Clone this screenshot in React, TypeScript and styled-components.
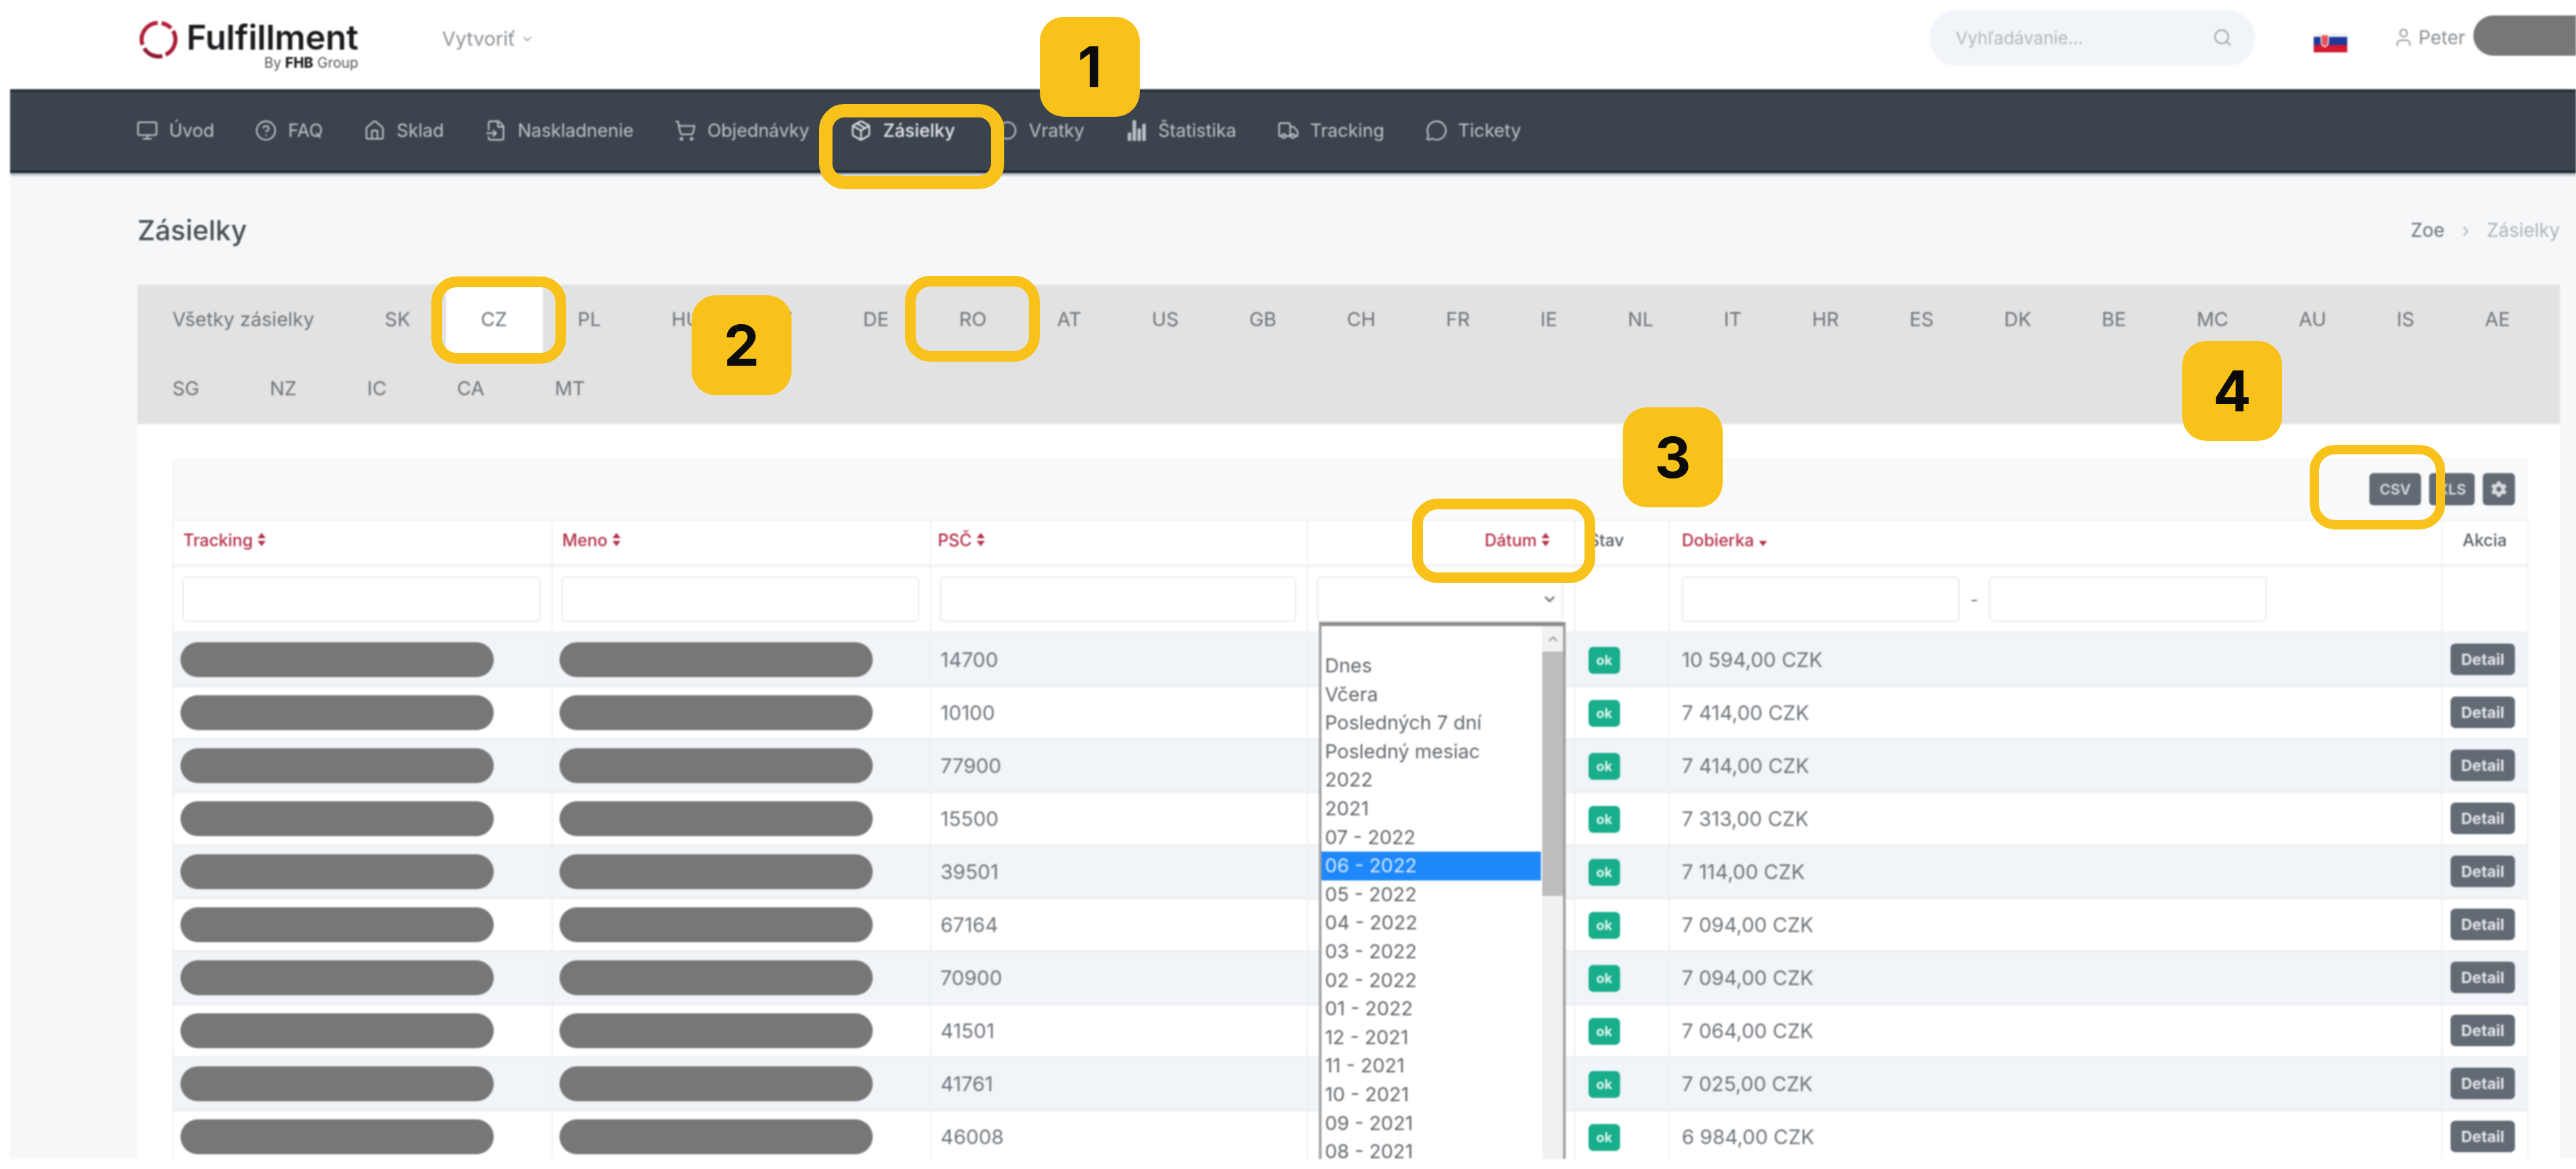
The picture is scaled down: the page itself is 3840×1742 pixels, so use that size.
import React from "react";
import styled, { createGlobalStyle } from "styled-components";
import {
  Monitor, CircleHelp, Home, FileInput, ShoppingCart, Package, RotateCcw,
  Truck, MessageCircle, Search, User, ChevronDown, ChevronUp,
} from "lucide-react";
import { FaCog } from "react-icons/fa";
import { IoStatsChart } from "react-icons/io5";

const Global = createGlobalStyle`
  html, body { margin: 0; padding: 0; background: #fff; }
  * { box-sizing: border-box; }
  body { font-family: Inter, "Open Sans", "Liberation Sans", sans-serif; }
`;

const Root = styled.div`
  position: relative;
  width: 3840px;
  height: 1742px;
  background: #fff;
  overflow: hidden;
`;
const Frame = styled.div`
  margin-left: 15px;
  height: 1727px;
  background: #f6f7f9;
  overflow: hidden;
  filter: blur(1.3px);
`;

/* top header */
const TopBar = styled.header`
  height: 133px;
  background: #fff;
  display: flex;
  align-items: center;
  padding-left: 192px;
`;
const Logo = styled.div`
  display: flex;
  align-items: flex-start;
  gap: 13px;
  width: 452px;
  padding-top: 2px;
`;
const LogoWords = styled.div`
  display: flex;
  flex-direction: column;
  align-items: flex-end;
`;
const LogoName = styled.div`
  font-size: 51px;
  font-weight: 600;
  line-height: 52px;
  letter-spacing: -0.2px;
  color: #1b1b1f;
`;
const LogoSub = styled.div`
  font-size: 21px;
  line-height: 24px;
  color: #55555c;
  b { color: #222; font-weight: 800; }
`;
const CreateMenu = styled.div`
  display: flex;
  align-items: center;
  gap: 8px;
  font-size: 29px;
  color: #8b9095;
  margin-top: -18px;
`;
const TopRight = styled.div`
  margin-left: auto;
  display: flex;
  align-items: center;
  margin-top: -21px;
`;
const SearchPill = styled.div`
  width: 486px;
  height: 83px;
  border-radius: 42px;
  background: #f1f4f8;
  display: flex;
  align-items: center;
  justify-content: space-between;
  padding: 0 34px 0 39px;
  font-size: 26px;
  color: #b3b7bc;
  svg { color: #a0a5aa; }
`;
const FlagSvg = styled.svg`
  margin: 15px 68px 0 87px;
  flex: none;
`;
const UserName = styled.div`
  display: flex;
  align-items: center;
  gap: 6px;
  font-size: 28px;
  color: #8a8f94;
  svg { color: #90959a; }
`;
const RedactedName = styled.div`
  width: 170px;
  height: 60px;
  margin: -6px -17px 0 12px;
  border-radius: 30px 0 0 30px;
  background: #777;
`;

/* dark menu */
const Menu = styled.nav`
  height: 125px;
  background: #3b444d;
  border-top: 4px solid #252d36;
  border-bottom: 4px solid #1d2935;
  box-shadow: 0 4px 2px #bfc3c8;
  display: flex;
  align-items: center;
  gap: 61px;
  padding: 0 0 2px 188px;
`;
const MenuItem = styled.a<{ $active?: boolean }>`
  display: flex;
  align-items: center;
  gap: 16px;
  font-size: 27px;
  font-weight: ${(p) => (p.$active ? 500 : 400)};
  color: ${(p) => (p.$active ? "#e4e6ec" : "#bcc1c7")};
  svg { flex: none; }
`;

/* content */
const Content = styled.main`
  padding: 0 24px 0 190px;
`;
const TitleRow = styled.div`
  height: 166px;
  display: flex;
  align-items: center;
  justify-content: space-between;
  padding-top: 4px;
`;
const Title = styled.h1`
  margin: 0;
  font-size: 41px;
  font-weight: 500;
  color: #4a4f55;
`;
const Crumbs = styled.div`
  display: flex;
  align-items: center;
  gap: 26px;
  font-size: 28px;
  color: #6b7076;
`;
const CrumbMuted = styled.span`
  color: #aeb4ba;
`;
const Tabs = styled.div`
  display: flex;
  flex-wrap: wrap;
  background: #e2e2e2;
  padding-bottom: 2px;
`;
const Tab = styled.a<{ $active?: boolean }>`
  height: 103px;
  padding: 0 53px 0 52px;
  display: flex;
  align-items: center;
  justify-content: center;
  font-size: 29px;
  color: #6f757b;
  background: ${(p) => (p.$active ? "#fff" : "transparent")};
`;
const Card = styled.section`
  background: #fff;
  padding: 52px 49px 0 52px;
`;
const Toolbar = styled.div`
  height: 90px;
  background: #f9fafb;
  border: 2px solid #f1f2f3;
  border-bottom: 0;
  display: flex;
  align-items: center;
  justify-content: flex-end;
  gap: 12px;
  padding: 0 16px 2px 0;
`;
const SmallButton = styled.button<{ $w: number }>`
  width: ${(p) => p.$w}px;
  height: 48px;
  border: 0;
  border-radius: 6px;
  background: #626b74;
  color: #d8dbde;
  font: 600 22px Inter, sans-serif;
  padding: 0;
  display: inline-flex;
  align-items: center;
  justify-content: center;
`;
const Table = styled.table`
  width: 100%;
  table-layout: fixed;
  border-collapse: collapse;
  font-size: 30px;
  color: #6f757b;
`;
const Th = styled.th<{ $align?: string; $pad?: string; $plain?: boolean }>`
  height: 68px;
  padding: ${(p) => p.$pad || "0 0 8px 14px"};
  text-align: ${(p) => p.$align || "left"};
  font-size: 25px;
  font-weight: 500;
  color: ${(p) => (p.$plain ? "#5a5f65" : "#b5304a")};
  border: 2px solid #f0f1f2;
  border-bottom-width: 4px;
  white-space: nowrap;
  svg { margin-left: 6px; vertical-align: -1px; }
`;
const FilterCell = styled.td<{ $pad?: string }>`
  position: relative;
  height: 100px;
  padding: ${(p) => p.$pad || "0 16px 0 13px"};
  border: 2px solid #f0f1f2;
  border-bottom-width: 4px;
  vertical-align: middle;
`;
const FilterBox = styled.div`
  height: 68px;
  background: #fff;
  border: 2px solid #e9ebed;
  border-radius: 6px;
`;
const SelectBox = styled(FilterBox)`
  display: flex;
  align-items: center;
  justify-content: flex-end;
  padding-right: 6px;
  color: #707070;
`;
const RangeRow = styled.div`
  display: flex;
  align-items: center;
  gap: 16px;
  width: 872px;
  font-size: 26px;
`;
const RangeBox = styled(FilterBox)`
  flex: 1;
`;
const Row = styled.tr<{ $odd: boolean }>`
  height: 79px;
  background: ${(p) => (p.$odd ? "#f1f4f8" : "#fff")};
  border-bottom: 3px solid #eceef0;
`;
const Td = styled.td<{ $pad?: string; $align?: string }>`
  padding: ${(p) => p.$pad || "0 0 0 14px"};
  text-align: ${(p) => p.$align || "left"};
  border-left: 2px solid #eef0f2;
  border-right: 2px solid #eef0f2;
  vertical-align: middle;
`;
const Redacted = styled.div`
  width: 467px;
  height: 52px;
  border-radius: 26px;
  background: #777;
`;
const Ok = styled.span`
  display: inline-flex;
  width: 47px;
  height: 40px;
  align-items: center;
  justify-content: center;
  border-radius: 7px;
  background: #18ae8b;
  color: #dff5ee;
  font-size: 20px;
  font-weight: 700;
`;
const Detail = styled.button`
  width: 96px;
  height: 47px;
  border: 0;
  border-radius: 7px;
  background: #626b74;
  color: #e2e4e7;
  font: 700 23px Inter, sans-serif;
  padding: 0;
`;

/* open select list */
const Dropdown = styled.div`
  position: absolute;
  z-index: 3;
  left: 16px;
  top: 82px;
  width: 368px;
  height: 840px;
  display: flex;
  background: #fff;
  border: 4px solid #a2a2a2;
  border-top: 6px solid #8c8c8c;
`;
const Options = styled.div`
  flex: 1;
  min-width: 0;
`;
const Option = styled.div<{ $selected?: boolean; $blank?: boolean }>`
  height: ${(p) => (p.$blank ? "38px" : "42.6px")};
  line-height: 42px;
  padding-left: 5px;
  margin-right: 2px;
  font-size: 29px;
  color: ${(p) => (p.$selected ? "#d3e8ff" : "#62676c")};
  background: ${(p) => (p.$selected ? "#1e88fb" : "transparent")};
`;
const Rail = styled.div`
  flex: none;
  width: 31px;
  background: #f1f1f1;
  display: flex;
  flex-direction: column;
  align-items: center;
  color: #a8a8a8;
`;
const RailArrow = styled.div`
  height: 38px;
  display: flex;
  align-items: center;
`;
const Thumb = styled.div`
  width: 100%;
  height: 364px;
  background: #bdbdbd;
`;

/* annotations */
const Notes = styled.div`
  position: absolute;
  inset: 0;
  pointer-events: none;
  filter: blur(0.6px);
`;
const Badge = styled.div<{ $x: number; $y: number }>`
  position: absolute;
  left: ${(p) => p.$x}px;
  top: ${(p) => p.$y}px;
  width: 149px;
  height: 149px;
  border-radius: 36px;
  background: #f9c21a;
  display: flex;
  align-items: center;
  justify-content: center;
  font-size: 84px;
  font-weight: 700;
  color: #0b0b0b;
`;
const Mark = styled.div<{ $x: number; $y: number; $w: number; $h: number; $b?: number }>`
  position: absolute;
  left: ${(p) => p.$x}px;
  top: ${(p) => p.$y}px;
  width: ${(p) => p.$w}px;
  height: ${(p) => p.$h}px;
  border: ${(p) => p.$b || 16}px solid #f9c21a;
  border-radius: 38px;
`;

const menu: [React.ElementType, string, boolean?][] = [
  [Monitor, "Úvod"],
  [CircleHelp, "FAQ"],
  [Home, "Sklad"],
  [FileInput, "Naskladnenie"],
  [ShoppingCart, "Objednávky"],
  [Package, "Zásielky", true],
  [RotateCcw, "Vratky"],
  [IoStatsChart, "Štatistika"],
  [Truck, "Tracking"],
  [MessageCircle, "Tickety"],
];
const tabs = ["Všetky zásielky", "SK", "CZ", "PL", "HU", "LT", "DE", "RO", "AT", "US", "GB", "CH", "FR", "IE", "NL", "IT", "HR", "ES", "DK", "BE", "MC", "AU", "IS", "AE", "SG", "NZ", "IC", "CA", "MT"];
const rows = [
  ["14700", "10 594,00 CZK"],
  ["10100", "7 414,00 CZK"],
  ["77900", "7 414,00 CZK"],
  ["15500", "7 313,00 CZK"],
  ["39501", "7 114,00 CZK"],
  ["67164", "7 094,00 CZK"],
  ["70900", "7 094,00 CZK"],
  ["41501", "7 064,00 CZK"],
  ["41761", "7 025,00 CZK"],
  ["46008", "6 984,00 CZK"],
];
const options = ["Dnes", "Včera", "Posledných 7 dní", "Posledný mesiac", "2022", "2021", "07 - 2022", "06 - 2022", "05 - 2022", "04 - 2022", "03 - 2022", "02 - 2022", "01 - 2022", "12 - 2021", "11 - 2021", "10 - 2021", "09 - 2021", "08 - 2021"];
const widths = [565, 564, 562, 398, 141, 1152, 128];

const Sort = ({ only }: { only?: boolean }) => (
  <svg width="14" height="22" viewBox="0 0 14 22" fill="currentColor">
    {!only && <path d="M7 1l6 8H1z" />}
    <path d="M1 13h12l-6 8z" />
  </svg>
);

const App = () => (
  <Root>
    <Global />
    <Frame>
      <TopBar>
        <Logo>
          <svg width="58" height="58" viewBox="0 0 58 58" fill="none" stroke="#b2203a" strokeWidth="6">
            <path d="M34 4.5A25 25 0 0 1 48 12" />
            <path d="M51 16A25 25 0 0 1 40 51.5" stroke="#a81c34" />
            <path d="M35 53.5A25 25 0 0 1 8 42" stroke="#8f1a2e" />
            <path d="M5.5 37A25 25 0 0 1 28 4" />
          </svg>
          <LogoWords>
            <LogoName>Fulfillment</LogoName>
            <LogoSub>By <b>FHB</b> Group</LogoSub>
          </LogoWords>
        </Logo>
        <CreateMenu>Vytvoriť <ChevronDown size={20} /></CreateMenu>
        <TopRight>
          <SearchPill>
            Vyhľadávanie...
            <Search size={30} strokeWidth={1.6} />
          </SearchPill>
          <FlagSvg width="50" height="28" viewBox="0 0 50 28">
            <rect width="50" height="5" fill="#f3f3f6" />
            <rect y="5" width="50" height="12" fill="#1d3a9c" />
            <rect y="17" width="50" height="11" fill="#d5172c" />
            <path d="M11 2h11v11q0 4-5.500 7q-5.500-3-5.500-7z" fill="#e8505f" stroke="#f4f4f4" strokeWidth="1.500" />
          </FlagSvg>
          <UserName><User size={32} strokeWidth={1.5} /> Peter</UserName>
          <RedactedName />
        </TopRight>
      </TopBar>
      <Menu>
        {menu.map(([Icon, label, active]) => (
          <MenuItem key={label} $active={active}>
            <Icon size={33} strokeWidth={1.7} />
            {label}
          </MenuItem>
        ))}
      </Menu>
      <Content>
        <TitleRow>
          <Title>Zásielky</Title>
          <Crumbs>Zoe <CrumbMuted>›</CrumbMuted> <CrumbMuted>Zásielky</CrumbMuted></Crumbs>
        </TitleRow>
        <Tabs>
          {tabs.map((t) => <Tab key={t} $active={t === "CZ"}>{t}</Tab>)}
        </Tabs>
        <Card>
          <Toolbar>
            <SmallButton $w={77}>CSV</SmallButton>
            <SmallButton $w={68}>XLS</SmallButton>
            <SmallButton $w={48}><FaCog size={24} /></SmallButton>
          </Toolbar>
          <Table>
            <colgroup>{widths.map((w, i) => <col key={i} width={w} />)}</colgroup>
            <thead>
              <tr>
                <Th>Tracking<Sort /></Th>
                <Th>Meno<Sort /></Th>
                <Th $pad="0 0 8px 10px">PSČ<Sort /></Th>
                <Th $align="right" $pad="0 35px 8px 0">Dátum<Sort /></Th>
                <Th $plain $pad="0 0 8px 20px">Stav</Th>
                <Th $pad="0 0 8px 18px">Dobierka<Sort only /></Th>
                <Th $plain $align="center" $pad="0 0 8px 0">Akcia</Th>
              </tr>
              <tr>
                <FilterCell><FilterBox /></FilterCell>
                <FilterCell><FilterBox /></FilterCell>
                <FilterCell><FilterBox /></FilterCell>
                <FilterCell>
                  <SelectBox><ChevronDown size={24} strokeWidth={2.6} /></SelectBox>
                  <Dropdown>
                    <Options>
                      <Option $blank />
                      {options.map((o) => <Option key={o} $selected={o === "06 - 2022"}>{o}</Option>)}
                    </Options>
                    <Rail>
                      <RailArrow><ChevronUp size={20} strokeWidth={3} /></RailArrow>
                      <Thumb />
                    </Rail>
                  </Dropdown>
                </FilterCell>
                <FilterCell />
                <FilterCell $pad="0 0 0 18px">
                  <RangeRow><RangeBox />-<RangeBox /></RangeRow>
                </FilterCell>
                <FilterCell />
              </tr>
            </thead>
            <tbody>
              {rows.map(([zip, amount], i) => (
                <Row key={i} $odd={i % 2 === 0}>
                  <Td $pad="0 0 0 10px"><Redacted /></Td>
                  <Td $pad="0 0 0 10px"><Redacted /></Td>
                  <Td>{zip}</Td>
                  <Td />
                  <Td $pad="0 0 0 20px"><Ok>ok</Ok></Td>
                  <Td $pad="0 0 0 18px">{amount}</Td>
                  <Td $pad="0 18px 0 0" $align="right"><Detail>Detail</Detail></Td>
                </Row>
              ))}
            </tbody>
          </Table>
        </Card>
      </Content>
    </Frame>
    <Notes>
      <Mark $x={1221} $y={155} $w={276} $h={127} $b={20} />
      <Badge $x={1550} $y={25}>1</Badge>
      <Mark $x={643} $y={412} $w={201} $h={130} />
      <Mark $x={1349} $y={411} $w={201} $h={128} />
      <Badge $x={1031} $y={440}>2</Badge>
      <Mark $x={2105} $y={743} $w={273} $h={126} />
      <Badge $x={2419} $y={607}>3</Badge>
      <Mark $x={3443} $y={663} $w={202} $h={126} $b={14} />
      <Badge $x={3253} $y={508}>4</Badge>
    </Notes>
  </Root>
);

export default App;
